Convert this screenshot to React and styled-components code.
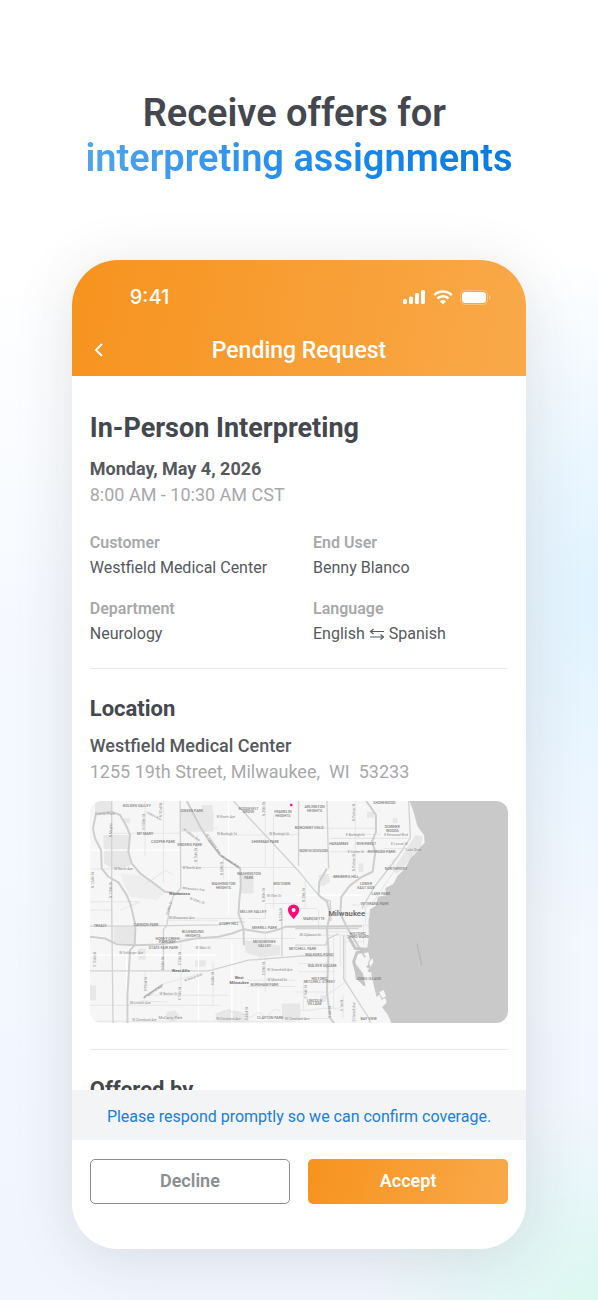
import React from 'react';
import styled, { createGlobalStyle, css } from 'styled-components';

const COLORS = {
  heading: '#44474d',
  text: '#55595e',
  muted: '#a7a9ab',
  button: '#8b8e91',
  blue: '#1a7fe0',
  line: '#e9eaeb',
  notice: '#f3f4f6',
  white: '#ffffff',
  pin: '#ff0a78',
};

const GRADIENTS = {
  orange: 'linear-gradient(100deg, #f7931e 0%, #f9a94a 100%)',
  blue: 'linear-gradient(90deg, #50a5ec 0%, #1b89ee 60%, #067be0 100%)',
};

const GlobalStyle = createGlobalStyle`
  * {
    box-sizing: border-box;
  }

  body {
    margin: 0;
    font-family: Roboto, "Liberation Sans", sans-serif;
    color: ${COLORS.text};
  }

  h1, h2, h3, p, dl, dd {
    margin: 0;
  }
`;

const Page = styled.main`
  height: 100vh;
  min-height: 800px;
  display: flex;
  flex-direction: column;
  padding: 91px 12% 51px;
  background:
    radial-gradient(ellipse 240px 200px at 100% 100%, #dbf8f0 0%, rgba(219, 248, 240, 0) 100%),
    radial-gradient(ellipse 200px 340px at 100% 46%, #e0f3ff 0%, rgba(224, 243, 255, 0) 100%),
    linear-gradient(180deg, #ffffff 20%, #f5f9ff 48%, #f1f5fe 100%);
`;

const Headline = styled.h1`
  margin-bottom: 79px;
  font-size: 38px;
  line-height: 45px;
  font-weight: 600;
  text-align: center;
  white-space: nowrap;
  color: ${COLORS.heading};
`;

const HeadlineAccent = styled.span`
  display: block;
  width: fit-content;
  margin: 0 auto;
  background: ${GRADIENTS.blue};
  background-clip: text;
  color: transparent;
`;

const Phone = styled.section`
  flex: 1;
  min-height: 0;
  display: flex;
  flex-direction: column;
  border-radius: 46px;
  overflow: hidden;
  background: ${COLORS.white};
  box-shadow: 0 8px 60px rgba(48, 48, 48, .13);
`;

const Header = styled.header`
  padding-bottom: 8px;
  background: ${GRADIENTS.orange};
  color: ${COLORS.white};
`;

const StatusBar = styled.div`
  display: flex;
  align-items: center;
  justify-content: space-between;
  height: 74px;
  padding: 0 35px 0 58px;
  font-family: Inter, sans-serif;
  font-size: 20px;
  font-weight: 500;
`;

const StatusIcons = styled.div`
  display: flex;
  align-items: center;
  gap: 7px;
`;

const TitleBar = styled.div`
  display: grid;
  grid-template-columns: 1fr auto 1fr;
  align-items: center;
  padding: 0 18px;
  line-height: 34px;
`;

const BackButton = styled.button`
  display: flex;
  width: 20px;
  padding: 0 0 2px;
  border: 0;
  background: none;
  color: inherit;
`;

const Title = styled.h2`
  font-size: 23px;
  font-weight: 500;
`;

const Body = styled.div`
  flex: 1;
  min-height: 0;
  padding: 36px 18px 0;
  overflow-y: auto;
  scrollbar-width: none;
`;

const Service = styled.h2`
  margin-bottom: 12px;
  font-size: 27px;
  line-height: 32px;
  font-weight: 700;
  color: ${COLORS.heading};
`;

const SectionTitle = styled.h3`
  margin-bottom: 10px;
  font-size: 22px;
  line-height: 28px;
  font-weight: 700;
  color: ${COLORS.heading};
`;

const Line = styled.p`
  font-size: 18px;
  line-height: 26px;
  font-weight: ${({ $weight }) => $weight || 400};
  color: ${({ $muted }) => ($muted ? COLORS.muted : COLORS.text)};
  white-space: pre-wrap;
`;

const Details = styled.dl`
  display: grid;
  grid-template-columns: 1fr 1fr;
  gap: 16px 28px;
  margin: 22px 0;
  font-size: 16px;
  line-height: 25px;

  dt {
    font-weight: 600;
    color: ${COLORS.muted};
  }

  dd {
    display: flex;
    align-items: center;
    gap: 4px;
  }
`;

const Divider = styled.hr`
  height: 1px;
  margin: 0 0 26px;
  border: 0;
  background: ${COLORS.line};
`;

const MapFrame = styled.div`
  margin: 16px 0 26px;
  border-radius: 12px;
  overflow: hidden;

  svg {
    display: block;
    width: 100%;
    height: auto;
  }
`;

const Notice = styled.p`
  padding: 14px 18px 10px;
  font-size: 16px;
  line-height: 26px;
  text-align: center;
  background: ${COLORS.notice};
  color: ${COLORS.blue};
`;

const Actions = styled.div`
  display: grid;
  grid-template-columns: 1fr 1fr;
  gap: 18px;
  padding: 19px 18px 45px;
`;

const outlined = css`
  border: 1px solid ${COLORS.button};
  background: ${COLORS.white};
  color: ${COLORS.button};
`;

const filled = css`
  border: 0;
  background: ${GRADIENTS.orange};
  color: ${COLORS.white};
`;

const Button = styled.button`
  height: 45px;
  padding: 0 0 2px;
  border-radius: 5px;
  font: 600 18px Roboto, sans-serif;
  ${({ $primary }) => ($primary ? filled : outlined)};
`;

const SignalIcon = () => (
  <svg width="23" height="15" viewBox="0 0 23 15" fill="currentColor" aria-hidden="true">
    <rect x="0" y="9" width="4" height="5" rx="1.500" />
    <rect x="6" y="6.500" width="4" height="7.500" rx="1.500" />
    <rect x="12" y="3" width="4" height="11" rx="1.500" />
    <rect x="18" y="0" width="4" height="14" rx="1.500" />
  </svg>
);

const WifiIcon = () => (
  <svg width="20" height="15" viewBox="0 0 20 15" aria-hidden="true">
    <g fill="none" stroke="currentColor" strokeWidth="2.5">
      <path d="M1.2 5.2a12.6 12.6 0 0 1 17.6 0" />
      <path d="M4.4 8.5a8 8 0 0 1 11.2 0" />
    </g>
    <path d="M10 14.6 6.9 11.3a4.6 4.6 0 0 1 6.2 0z" fill="currentColor" />
  </svg>
);

const BatteryIcon = () => (
  <svg width="31" height="15" viewBox="0 0 31 15" aria-hidden="true">
    <rect x=".5" y=".5" width="27" height="14" rx="4.5" fill="none" stroke="currentColor" opacity=".3" />
    <rect x="2" y="2" width="24" height="11" rx="3.500" fill="currentColor" />
    <path d="M29 5v5c1-.4 1.700-1.400 1.700-2.500S30 5.400 29 5z" fill="currentColor" opacity=".35" />
  </svg>
);

const ChevronIcon = () => (
  <svg width="16" height="16" viewBox="0 0 16 16" fill="none" stroke="currentColor" strokeWidth="2" aria-hidden="true">
    <path d="M12 2 6 8l6 6" />
  </svg>
);

const SwapIcon = () => (
  <svg width="16" height="14" viewBox="0 0 16 14" fill="none" stroke="currentColor" strokeWidth="1.200" aria-label="to and from">
    <path d="M15 4.500H1.500M4.500 2l-3 2.500 3 2.500M1 10h13.500M11.500 7.500l3 2.500-3 2.500" />
  </svg>
);

const PARKS = [
  'M30 18h50v38l-50 6z',
  'M55 120h78l-4 56 10 34-50 15-32-20z',
  'M287 48h98v62h-98z',
  'M467 240h38v55h-38z',
  'M85 395h62v52l-60-6z',
  'M115 70h20v14h-20z',
  'M350 30h32v20h-32z',
  'M160 460h22v34h-22z',
  'M330 495h32v20h-32z',
  'M480 435l60 10 45 6v28l-60 8-45-16z',
  'M245 650l25-4 18 22-30 14-18-12z',
  'M390 655l40-14 60 16v24h-90z',
  'M590 625h55v50h-55z',
  'M700 240l30-4 4 24-20 14-14-6z',
  'M845 50h22v18h-22z',
  'M922 70h14v14h-14z',
  'M820 205h14v26h-14z',
  'M990 120l22 4-6 36-70 76-14-10z',
  'M15 570h18v45H15z',
  'M705 600h18v20h-18z',
];

const STREETS = [
  'M15 345h70M85 115h200M15 222h130M285 217h345M287 100h110M400 120h230M540 120l100-2M15 630h390M15 678h615',
  'M180 18v165M235 18v245M336 120v90M415 190v60M540 18v200M565 60v280M180 527v60M287 430v160M384 500v130M540 420v170',
  'M485 555h145M485 574h145M190 600h240M15 320h150l-60 25M635 340h60M240 375h160M250 370h230M490 370h50v-45h100',
  'M182 266l60-40 20 12M178 605l60-40 118-33M130 627l40-10 80 3M235 430h395M300 100l35 35',
  'M735 100h140M735 130h230M735 170h200M640 100h95M640 170h95M735 245h100M810 18v230M790 120l95-2M895 160h90',
  'M660 250v90M700 345v60M725 410v200M745 420v225M765 420v95M780 420v140l-40 30-20 12',
  'M640 420h140M640 480h110M640 505h110M640 530h110M630 590h110M630 645h50l30-6h50M773 600v70M810 620v64',
  'M655 555v90M640 670h100M777 440h55M835 390v60M850 370v80M800 390h50M720 410h65v20',
  'M920 200l40-40M925 195v35l-60 90-30 20M800 330h40v55M770 355h80',
  'M391 675c25-50 40-20 62-25s30 28 50 12 25-10 38 8c12-12 25-38 45-22',
];

const ROADS = [
  'M80 18v320l4 346',
  'M285 18l2 262-22 22-12 40-8 50-10 10v125',
  'M445 18l195 210 45 55 22 25 28 10 2 60',
  'M15 393h135l250-4 50-8h28',
  'M15 527h355l120-32 155-12h100',
  'M590 345v138',
  'M640 18v195',
  'M725 18l5 202',
  'M630 393h200M630 400h190',
  'M630 450h90l10-20 30-15',
  'M775 420v130l25 40 45 70 12 24',
  'M970 18l5 110-40 60-70 90-35 62',
];

const HIGHWAYS = [
  'M32 60l-8 40 6 30 18 35 2 55 20 25 30 17 25 38 12 30 14 60-2 60-14 15-3 55-5 80v84',
  'M30 57l50-7 25 10 20 35 10 25-5 50 10 35 25 30 35 25 40 30 45 5',
  'M305 18l40 77 25 40 35 45 60 40 2 50-5 50-2 35 15 45 1 50',
  'M15 425l45 5 35 17 55 3 70-2 60-8 50-10 70-5 40-10 35-13 65 11 35-8 25-10h45l185-2',
  'M725 220l-23 40-2 40 25 20 10 35-10 45 5 70-5 120 10 80 12 14',
  'M842 18l13 17 17 25v50l-12 30 10 30-8 60-32 15-35 25-27 35-3 50 20 42 55 90',
];

// [x, y, text]
const LABELS = [
  [155, 37, 'GOLDEN VALLEY'], [320, 50, 'DINEEN PARK'], [490, 45, 'ROOSEVELT'], [490, 55, 'GROVE'],
  [593, 55, 'FRANKLIN'], [593, 66, 'HEIGHTS'], [180, 121, 'MT MARY'], [234, 145, 'COOPER PARK'],
  [314, 153, 'ENDERIS PARK'], [540, 145, 'SHERMAN PARK'], [491, 241, 'WASHINGTON'], [491, 252, 'PARK'],
  [415, 270, 'WASHINGTON'], [415, 281, 'HEIGHTS'], [590, 271, 'MIDTOWN'], [504, 353, 'MILLER VALLEY'],
  [688, 40, 'ARLINGTON'], [688, 51, 'HEIGHTS'], [672, 101, 'BORCHERT FIELD'], [761, 149, 'HARAMBEE'],
  [843, 149, 'RIVERWEST'], [685, 172, 'NORTH DIVISION'], [888, 174, 'RIVERSIDE PARK'], [921, 99, 'DOWNER'],
  [921, 110, 'WOODS'], [932, 225, 'NORTHPOINT'], [782, 250, "BREWER'S HILL"], [842, 271, 'LOWER'],
  [842, 282, 'EAST SIDE'], [887, 299, 'LAKE PARK'], [868, 331, 'VETERANS PARK'], [897, 27, 'SHOREWOOD'],
  [45, 396, 'TREALY'], [183, 394, 'CANNON PARK'], [431, 389, 'STORY HILL'], [538, 401, 'MERRILL PARK'],
  [247, 435, 'HONEY CREEK'], [247, 445, 'PARKWAY'], [323, 415, 'BLUEMOUND'], [323, 426, 'HEIGHTS'],
  [235, 463, 'STATE FAIR PARK'], [538, 445, 'MENOMONEE'], [538, 455, 'VALLEY'], [652, 466, 'MITCHELL PARK'],
  [538, 573, 'BURNHAM PARK'], [555, 670, 'CLAYTON PARK'], [686, 375, 'MARQUETTE'], [703, 483, "WALKER'S POINT"],
  [711, 515, 'WALKER SQUARE'], [703, 553, 'HISTORIC'], [703, 564, 'MITCHELL STREET'], [688, 620, 'LINCOLN'],
  [688, 630, 'VILLAGE'], [818, 420, 'HISTORIC'], [818, 430, 'THIRD WARD'], [850, 555, 'JONES ISLAND'],
  [850, 673, 'BAY VIEW'],
];

// [x, y, text, angle along the street]
const STREET_LABELS = [
  [422, 68, 'W Keefe Ave'], [425, 119, 'W Burleigh St'], [582, 119, 'W Burleigh St'], [115, 224, 'W North Ave'],
  [320, 221, 'W North Ave'], [325, 285, 'Milwaukee Ave', 5], [567, 306, 'W Vliet St'], [205, 65, 'Lisbon Ave', 28],
  [317, 122, 'W Lisbon Ave', 36], [382, 148, 'W Appleton Ave', 55], [433, 202, 'W Lisbon Ave', 32],
  [335, 320, 'W State St', 20], [290, 372, 'W Wisconsin Ave'], [354, 462, 'W Main St'], [138, 478, 'W Schlinger Ave'],
  [584, 526, 'W Greenfield Ave'], [576, 557, 'W Mitchell St'], [205, 593, 'W National Ave', -33],
  [325, 550, 'W Beloit Ave', -20], [250, 600, 'W Becher St'], [166, 627, 'W Lincoln Ave'],
  [178, 676, 'W Cleveland Ave'], [430, 674, 'W Cleveland Ave'], [636, 674, 'W Cleveland Ave'],
  [810, 123, 'E Burleigh St'], [932, 124, 'E Kenwood Blvd'], [942, 149, 'E Locust St'], [812, 174, 'E Center St'],
  [675, 424, 'W Clybourn St'], [985, 167, 'Lake Drive'],
  [232, 45, 'N 92nd St', -90], [180, 80, 'N 100th St', -90], [336, 180, 'N 76th St', -90], [415, 220, 'N 60th St', -90],
  [540, 42, 'N 35th St', -90], [80, 105, 'N Mayfair', -90], [28, 255, 'N 124th St', -90], [82, 285, 'N 115th St', -90],
  [540, 300, 'N 35th St', -90], [809, 52, 'N Palmer St', -90], [809, 202, 'N Palmer St', -90], [660, 300, 'N 20th St', -90],
  [32, 492, 'S 124th St', -90], [236, 505, 'S 84th St', -90], [287, 490, 'S 76th St', -90], [287, 595, 'S 76th St', -90],
  [186, 567, 'S 92nd St', -90], [386, 550, 'S 60th St', -90], [540, 520, 'S 35th St', -90], [487, 655, 'S 43rd St', -90],
  [664, 590, 'S 16th St', -90], [736, 650, 'S 6th St', -90], [773, 630, 'S 1st St', -90], [810, 650, 'S Howell Ave', -90],
  [590, 358, 'N 27th St', -90], [255, 340, 'N 84th St', -72],
];

const renderLabels = labels => labels.map(([x, y, text, angle]) => (
  <text key={`${text}-${x}-${y}`} x={x} y={y} transform={angle ? `rotate(${angle} ${x} ${y})` : undefined}>
    {text}
  </text>
));

const LocationMap = () => (
  <MapFrame>
    <svg viewBox="15 18 1254 666" role="img" aria-label="Map of Milwaukee" fontFamily="Roboto, sans-serif" textAnchor="middle">
      <rect x="15" y="18" width="1254" height="666" fill="#f6f6f6" />
      <g fill="#e7e7e7">{PARKS.map(d => <path key={d} d={d} />)}</g>
      <path d="M105 235l60 5 80 50-30 25-80-10z" fill="#eeeeee" />
      <g fill="none" strokeLinejoin="round">
        <g stroke="#ffffff" strokeWidth="4">
          <path d="M15 165h270M15 480h380M430 18v340M125 480v204M340 430v250M440 440v240M630 300h200M520 580v100" />
        </g>
        <g stroke="#e6e6e6" strokeWidth="3">{STREETS.map(d => <path key={d} d={d} />)}</g>
        <g stroke="#d2d2d2" strokeWidth="4">{ROADS.map(d => <path key={d} d={d} />)}</g>
        <g stroke="#cecece" strokeWidth="6">{HIGHWAYS.map(d => <path key={d} d={d} />)}</g>
        <path d="M370 135l35 45 60 40M178 605l55-38" stroke="#bcbcbc" strokeWidth="4" />
        <path d="M790 425l20 35 60 4-55 8-10 28 10 35 22 35M850 530l12-14M846 518l14-16" stroke="#c6c6c6" strokeWidth="9" />
        <path d="M806 500l5 50 30 25-8-40z" fill="#c6c6c6" />
      </g>
      <path
        d="M972 18l10 25 6 20 8 30 20 28 2 22-12 12-18 24-12 10-16 30-24 24-12 24-24 12 2 22-24 4-6 26-18 12-4 38 2 40-6 34 8 40 4 42 10 45 6 24 12-12 12 8 6 20-14 14 18 24 12 28 8 28h340V18z"
        fill="#c9c9c9"
      />
      <path d="M862 485l-12 16 4 18 12-18zM880 590l16-8 8 22-14 8z" fill="#f6f6f6" stroke="#c9c9c9" strokeWidth="3" />
      <path d="M995 445l14 66" stroke="#b8b8b8" strokeWidth="4" />
      <g fontSize="11" fontWeight="500" fill="#808080">{renderLabels(LABELS)}</g>
      <g fontSize="10" fill="#8c8c8c">{renderLabels(STREET_LABELS)}</g>
      <g fontSize="12" fontWeight="600" fill="#666666">
        <text x="283" y="301">Wauwatosa</text>
        <text x="287" y="530">West Allis</text>
        <text x="462" y="552">West</text>
        <text x="462" y="565">Milwaukee</text>
      </g>
      <text x="256" y="672" fontSize="12" fill="#8c8c8c">McCarty Park</text>
      <text x="60" y="59" fontSize="12" fill="#a0a0a0">Currie Park</text>
      <text x="784" y="362" fontSize="23" fontWeight="600" fill="#6a6a6a">Milwaukee</text>
      <circle cx="618" cy="30" r="4" fill={COLORS.pin} />
      <path d="M625 372c-9-10-17-18-17-27a17 17 0 0 1 34 0c0 9-8 17-17 27z" fill={COLORS.pin} />
      <circle cx="625" cy="345" r="6" fill={COLORS.white} />
    </svg>
  </MapFrame>
);

const App = () => (
  <>
    <GlobalStyle />
    <Page>
      <Headline>
        Receive offers for&nbsp;
        <HeadlineAccent>interpreting assignments</HeadlineAccent>
      </Headline>
      <Phone>
        <Header>
          <StatusBar>
            <span>9:41</span>
            <StatusIcons>
              <SignalIcon />
              <WifiIcon />
              <BatteryIcon />
            </StatusIcons>
          </StatusBar>
          <TitleBar>
            <BackButton type="button" aria-label="Back"><ChevronIcon /></BackButton>
            <Title>Pending Request</Title>
          </TitleBar>
        </Header>
        <Body>
          <Service>In-Person Interpreting</Service>
          <Line $weight={700}>Monday, May 4, 2026</Line>
          <Line $muted>8:00 AM - 10:30 AM CST</Line>
          <Details>
            <div>
              <dt>Customer</dt>
              <dd>Westfield Medical Center</dd>
            </div>
            <div>
              <dt>End User</dt>
              <dd>Benny Blanco</dd>
            </div>
            <div>
              <dt>Department</dt>
              <dd>Neurology</dd>
            </div>
            <div>
              <dt>Language</dt>
              <dd>
                English
                <SwapIcon />
                Spanish
              </dd>
            </div>
          </Details>
          <Divider />
          <SectionTitle>Location</SectionTitle>
          <Line $weight={500}>Westfield Medical Center</Line>
          <Line $muted>{'1255 19th Street, Milwaukee,  WI  53233'}</Line>
          <LocationMap />
          <Divider />
          <SectionTitle>Offered by</SectionTitle>
        </Body>
        <Notice>Please respond promptly so we can confirm coverage.</Notice>
        <Actions>
          <Button type="button">Decline</Button>
          <Button type="button" $primary>Accept</Button>
        </Actions>
      </Phone>
    </Page>
  </>
);

export default App;
